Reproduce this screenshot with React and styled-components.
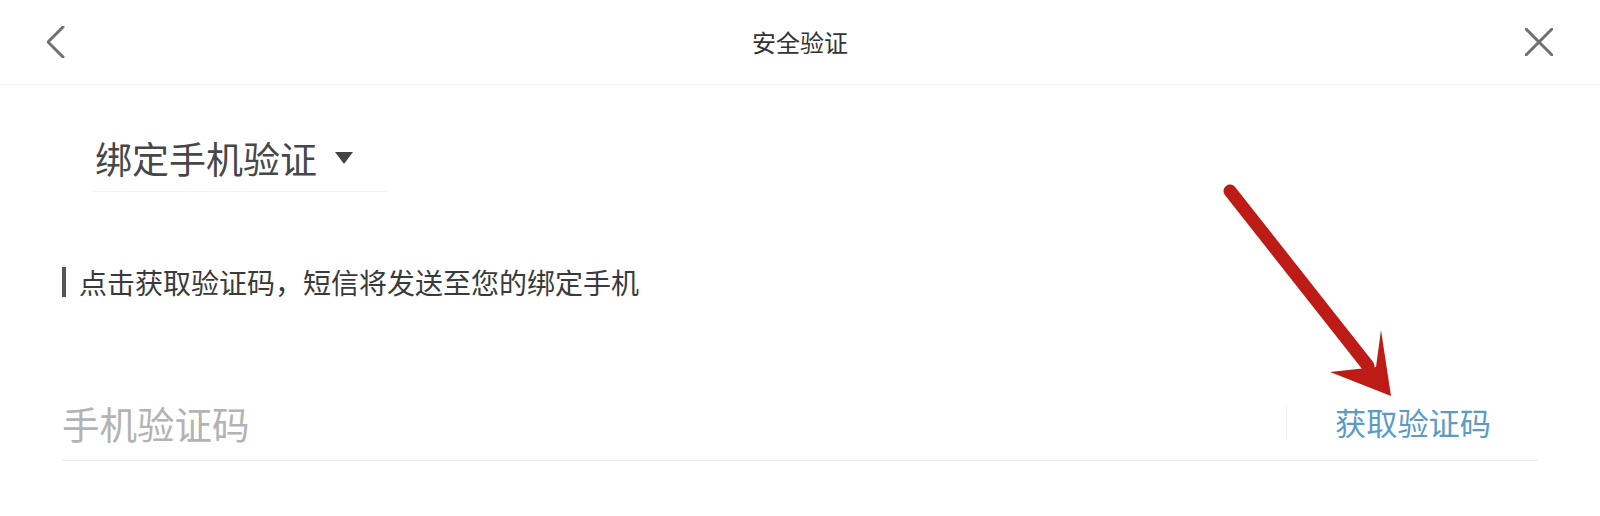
import React from "react"
import styled, { createGlobalStyle } from "styled-components"

const GlobalStyle = createGlobalStyle`
  html, body {
    margin: 0;
    padding: 0;
    background: #fff;
  }
  body {
    font-family: "Noto Sans CJK SC", "Noto Sans", sans-serif;
    color: #333;
  }
`

const Page = styled.div`
  position: relative;
  width: 1600px;
  height: 516px;
  overflow: hidden;
  background: #fff;
`
const Header = styled.header`
  display: grid;
  grid-template-columns: 1fr auto 1fr;
  align-items: center;
  height: 84px;
  padding: 0 47px;
  border-bottom: 1px solid #f2f2f2;
`
const IconButton = styled.button`
  display: flex;
  align-items: center;
  justify-self: ${(p) => (p.$right ? "end" : "start")};
  padding: 0;
  border: 0;
  background: none;
  cursor: pointer;
`
const Title = styled.h1`
  margin: 0;
  font-size: 24px;
  font-weight: 400;
  line-height: 32px;
  color: #333;
`
const Content = styled.main`
  display: flex;
  flex-direction: column;
  align-items: flex-start;
  padding: 0 62px;
`
const Dropdown = styled.div`
  display: flex;
  align-items: center;
  gap: 18px;
  box-sizing: border-box;
  width: 294px;
  margin: 49px 0 0 31px;
  padding: 0 0 9px 2px;
  border-bottom: 1px solid #f2f2f2;
  font-size: 37px;
  line-height: 48px;
  color: #474747;
  cursor: pointer;
`
const Caret = styled.span`
  width: 0;
  height: 0;
  border-left: 9px solid transparent;
  border-right: 9px solid transparent;
  border-top: 12px solid #444;
`
const Hint = styled.p`
  display: flex;
  align-items: center;
  gap: 13px;
  margin: 75px 0 0;
  font-size: 28px;
  line-height: 30px;
  color: #3a3a3a;

  &::before {
    content: "";
    width: 4px;
    height: 30px;
    background: #555;
  }
`
const CodeRow = styled.div`
  display: flex;
  align-items: center;
  align-self: stretch;
  margin-top: 100px;
  padding-bottom: 13px;
  border-bottom: 1px solid #eeeeee;
`
const CodeInput = styled.input`
  flex: 1;
  min-width: 0;
  height: 50px;
  padding: 0;
  border: 0;
  outline: none;
  background: transparent;
  font-family: inherit;
  font-size: 37.5px;
  color: #333;

  &::placeholder {
    color: #b3b3b3;
  }
`
const SendButton = styled.button`
  display: flex;
  align-items: center;
  height: 34px;
  padding: 0 47px 0 48px;
  border: 0;
  border-left: 1px solid #f0f0f0;
  background: none;
  font-family: inherit;
  font-size: 31.2px;
  line-height: 34px;
  color: #5b9bc5;
  cursor: pointer;
`
const Pointer = styled.svg`
  position: absolute;
  left: 1220px;
  top: 180px;
`

const BackIcon = () => (
  <svg width="18" height="32" viewBox="0 0 18 32" fill="none">
    <polyline points="16,1 1,16 16,31" stroke="#707070" strokeWidth="3" strokeLinecap="round" strokeLinejoin="round" />
  </svg>
)

const CloseIcon = () => (
  <svg width="28" height="28" viewBox="0 0 28 28" fill="none">
    <path d="M1 1 L27 27 M27 1 L1 27" stroke="#707070" strokeWidth="3" strokeLinecap="round" />
  </svg>
)

const App = () => (
  <Page>
    <GlobalStyle />
    <Header>
      <IconButton aria-label="返回">
        <BackIcon />
      </IconButton>
      <Title>安全验证</Title>
      <IconButton $right aria-label="关闭">
        <CloseIcon />
      </IconButton>
    </Header>
    <Content>
      <Dropdown>
        绑定手机验证
        <Caret />
      </Dropdown>
      <Hint>点击获取验证码，短信将发送至您的绑定手机</Hint>
      <CodeRow>
        <CodeInput placeholder="手机验证码" />
        <SendButton>获取验证码</SendButton>
      </CodeRow>
    </Content>
    {/* red annotation arrow drawn over the screenshot */}
    <Pointer width="190" height="230" viewBox="0 0 190 230">
      <line x1="10" y1="11" x2="148" y2="186" stroke="#bd1c16" strokeWidth="13" strokeLinecap="round" />
      <polygon points="171,216 110,192 156,187 161,150" fill="#bd1c16" />
    </Pointer>
  </Page>
)

export default App
